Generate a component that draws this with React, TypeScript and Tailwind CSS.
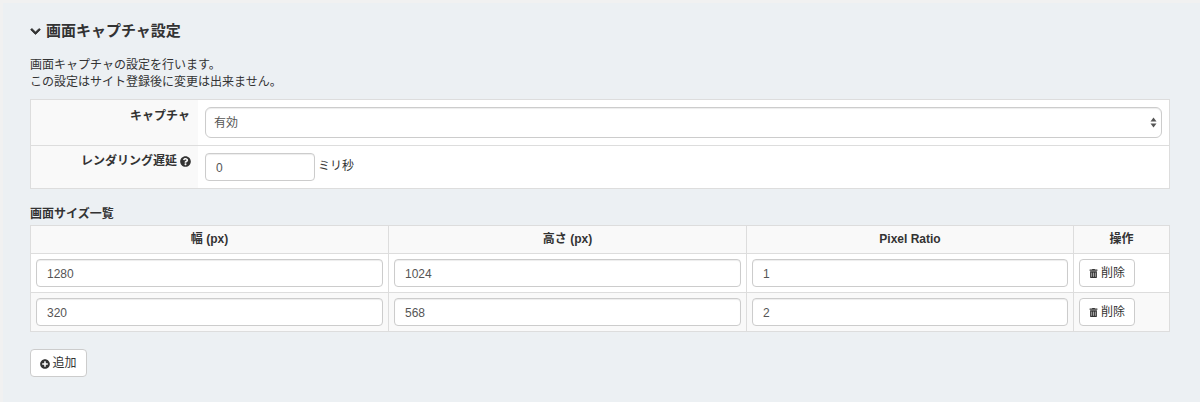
import React from 'react';
import { FaChevronDown, FaQuestionCircle, FaTrashAlt, FaPlusCircle } from 'react-icons/fa';

const FONT = "font-['Liberation_Sans','Noto_Sans_CJK_JP',sans-serif]";

const SIZES = [
  { w: '1280', h: '1024', r: '1', bg: 'bg-white' },
  { w: '320', h: '568', r: '2', bg: 'bg-[#f9f9f9]' },
];

const inputClass =
  'block h-[28px] w-full rounded-[4px] border border-[#cccccc] bg-white px-[10px] pt-[1px] text-[12px] text-[#555555] shadow-[inset_0_1px_1px_rgba(0,0,0,0.075)] outline-none';

const App: React.FC = () => {
  return (
    <div className={`${FONT} h-[402px] w-[1200px] overflow-hidden bg-[#f1f1f1] pt-[3px] pl-[3px] text-[12px] leading-[17px] text-[#333333]`}>
      <div className="h-full bg-[#ecf0f3] pt-[18px] pr-[30px] pl-[27px]">
        <h2 className="flex h-[20px] items-center gap-[5px] text-[15px] leading-[20px] font-bold">
          <FaChevronDown className="stroke-current stroke-[40px] text-[11px]" />
          <span className="text-[15px]">画面キャプチャ設定</span>
        </h2>

        <p className="mt-[16px] mb-[8px]">
          画面キャプチャの設定を行います。
          <br />
          この設定はサイト登録後に変更は出来ません。
        </p>

        <div className="border border-[#dddddd] bg-white">
          <div className="flex h-[46px] border-b border-[#dddddd]">
            <div className="w-[167px] bg-[#f9f9f9] pt-[8px] pr-[8px] text-right font-bold">キャプチャ</div>
            <div className="flex-1 pt-[7px] pr-[7px] pl-[7px]">
              <div className="flex h-[31px] items-center justify-between rounded-[6px] border border-[#cccccc] pr-[4px] pl-[8px] text-[#555555] shadow-[inset_0_1px_1px_rgba(0,0,0,0.075)]">
                <span className="pt-[1px]">有効</span>
                <svg width="7" height="11" viewBox="0 0 7 11" fill="#555555">
                  <path d="M3.5 0.5 L6.5 4.5 H0.5 Z" />
                  <path d="M0.5 6.5 H6.5 L3.5 10.5 Z" />
                </svg>
              </div>
            </div>
          </div>
          <div className="flex h-[42px]">
            <div className="flex w-[167px] justify-end gap-[3px] bg-[#f9f9f9] pt-[7px] pr-[7px] font-bold">
              <span>レンダリング遅延</span>
              <FaQuestionCircle className="mt-[3px] text-[11px]" />
            </div>
            <div className="flex items-start gap-[3px] pt-[7px] pl-[7px]">
              <div className="w-[110px]">
                <input readOnly value="0" className={inputClass} />
              </div>
              <span className="pt-[5px] whitespace-nowrap">ミリ秒</span>
            </div>
          </div>
        </div>

        <h3 className="mt-[17px] mb-[2px] font-bold">画面サイズ一覧</h3>

        <table className="w-full table-fixed border-collapse border border-[#dddddd]">
          <colgroup>
            <col className="w-[358px]" />
            <col className="w-[358px]" />
            <col className="w-[327px]" />
            <col />
          </colgroup>
          <thead>
            <tr className="h-[28px] bg-[#f9f9f9]">
              {['幅 (px)', '高さ (px)', 'Pixel Ratio', '操作'].map(label => (
                <th key={label} className="border border-[#dddddd] text-center font-bold">
                  {label}
                </th>
              ))}
            </tr>
          </thead>
          <tbody>
            {SIZES.map(row => (
              <tr key={row.w} className={`h-[39px] ${row.bg}`}>
                {[row.w, row.h, row.r].map((value, i) => (
                  <td key={i} className="border border-[#dddddd] px-[5px]">
                    <input readOnly value={value} className={inputClass} />
                  </td>
                ))}
                <td className="border border-[#dddddd] px-[5px]">
                  <button className="flex h-[28px] w-[56px] items-center justify-center gap-[3px] rounded-[4px] border border-[#cccccc] bg-white pt-[1px]">
                    <FaTrashAlt className="text-[9px]" />
                    削除
                  </button>
                </td>
              </tr>
            ))}
          </tbody>
        </table>

        <button className="mt-[17px] flex h-[28px] w-[57px] items-center justify-center gap-[2px] rounded-[4px] border border-[#cccccc] bg-white pt-[1px]">
          <FaPlusCircle className="text-[10px]" />
          追加
        </button>
      </div>
    </div>
  );
};

export default App;
